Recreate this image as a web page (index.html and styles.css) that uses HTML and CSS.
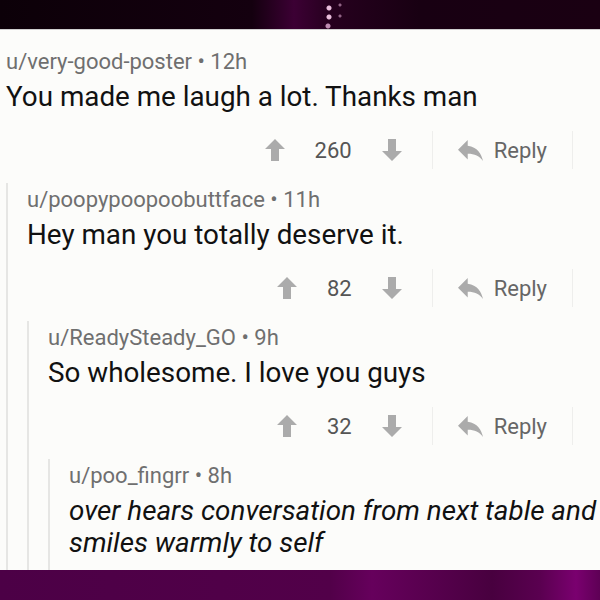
FILE: index.html
```html
<!DOCTYPE html>
<html lang="en">
<head>
    <meta charset="UTF-8">
    <meta name="viewport" content="width=device-width, initial-scale=1.0">
    <title>Comment thread</title>
    <link rel="stylesheet" href="styles.css">
</head>
<body>
    <div class="band band-top"></div>

    <main class="thread">
        <div class="comment">
            <div class="meta">u/very-good-poster &bull; 12h</div>
            <p class="text">You made me laugh a lot. Thanks man</p>
            <div class="actions">
                <svg class="vote" viewBox="0 0 20 22"><path d="M10 0L20 10H14V22H6V10H0Z"/></svg>
                <span class="count">260</span>
                <svg class="vote" viewBox="0 0 20 22"><path d="M10 22L20 12H14V0H6V12H0Z"/></svg>
                <span class="sep"></span>
                <svg class="reply-icon" viewBox="3 5 18 15"><path d="M10 9V5l-7 7 7 7v-4.1c5 0 8.5 1.6 11 5.1-1-5-4-10-11-11z"/></svg>
                <span class="reply">Reply</span>
                <span class="sep"></span>
            </div>

            <div class="comment nested">
                <div class="meta">u/poopypoopoobuttface &bull; 11h</div>
                <p class="text">Hey man you totally deserve it.</p>
                <div class="actions">
                    <svg class="vote" viewBox="0 0 20 22"><path d="M10 0L20 10H14V22H6V10H0Z"/></svg>
                    <span class="count">82</span>
                    <svg class="vote" viewBox="0 0 20 22"><path d="M10 22L20 12H14V0H6V12H0Z"/></svg>
                    <span class="sep"></span>
                    <svg class="reply-icon" viewBox="3 5 18 15"><path d="M10 9V5l-7 7 7 7v-4.1c5 0 8.5 1.6 11 5.1-1-5-4-10-11-11z"/></svg>
                    <span class="reply">Reply</span>
                    <span class="sep"></span>
                </div>

                <div class="comment nested">
                    <div class="meta">u/ReadySteady_GO &bull; 9h</div>
                    <p class="text">So wholesome. I love you guys</p>
                    <div class="actions">
                        <svg class="vote" viewBox="0 0 20 22"><path d="M10 0L20 10H14V22H6V10H0Z"/></svg>
                        <span class="count">32</span>
                        <svg class="vote" viewBox="0 0 20 22"><path d="M10 22L20 12H14V0H6V12H0Z"/></svg>
                        <span class="sep"></span>
                        <svg class="reply-icon" viewBox="3 5 18 15"><path d="M10 9V5l-7 7 7 7v-4.1c5 0 8.5 1.6 11 5.1-1-5-4-10-11-11z"/></svg>
                        <span class="reply">Reply</span>
                        <span class="sep"></span>
                    </div>

                    <div class="comment nested">
                        <div class="meta">u/poo_fingrr &bull; 8h</div>
                        <p class="text italic">over hears conversation from next table and smiles warmly to self</p>
                    </div>
                </div>
            </div>
        </div>
    </main>

    <div class="band band-bottom"></div>
</body>
</html>
```

FILE: styles.css
```css
:root {
    --meta: #6f6f6f;
    --text: #111111;
    --icon: #ababab;
    --line: #e6e6e4;
    --paper: #fcfcfa;
}

* {
    margin: 0;
    padding: 0;
    box-sizing: border-box;
}

body {
    font-family: Roboto, 'Liberation Sans', sans-serif;
    width: 600px;
    height: 600px;
    display: flex;
    flex-direction: column;
    overflow: hidden;
    background: var(--paper);
}

.band {
    height: 30px;
    flex: none;
}

.band-top {
    background:
        radial-gradient(circle at 329px 8px, rgba(255, 210, 240, 0.9) 0 2px, transparent 3px),
        radial-gradient(circle at 329px 17px, rgba(255, 210, 240, 0.9) 0 2px, transparent 3px),
        radial-gradient(circle at 328px 26px, rgba(255, 200, 240, 0.7) 0 2px, transparent 3px),
        radial-gradient(circle at 340px 5px, rgba(255, 200, 240, 0.5) 0 1px, transparent 2px),
        radial-gradient(circle at 340px 16px, rgba(255, 200, 240, 0.5) 0 1px, transparent 2px),
        linear-gradient(90deg, #0c0008 0%, #14000f 42%, #3c0034 49%, #26001e 55%, #180012 70%, #1a0012 100%);
    border-bottom: 1px solid #cfcfcf;
}

.band-bottom {
    background: linear-gradient(90deg, #4c0046 0%, #520049 55%, #66005c 62%, #48003f 82%, #5a0050 90%, #7a006f 96%, #5e0055 100%);
}

.thread {
    flex: 1;
    overflow: hidden;
    padding: 20px 0 0 6px;
}

.meta {
    font-size: 22px;
    line-height: 24px;
    color: var(--meta);
}

.text {
    font-size: 27.8px;
    line-height: 32px;
    color: var(--text);
    margin-top: 7px;
}

.italic {
    font-style: italic;
}

.actions {
    display: flex;
    align-items: center;
    justify-content: flex-end;
    height: 40px;
    margin-top: 17px;
    padding-right: 27px;
    color: #555;
}

.vote {
    width: 20px;
    height: 22px;
    fill: var(--icon);
}

.count {
    font-size: 22px;
    margin: 0 30px;
}

.sep {
    width: 1px;
    height: 38px;
    background: #eeeeec;
    margin-left: 30px;
}

.sep:last-child {
    margin-left: 25px;
}

.reply-icon {
    width: 25px;
    height: 21px;
    fill: var(--icon);
    margin-left: 25px;
}

.reply {
    font-size: 22px;
    color: #666;
    margin-left: 11px;
}

.nested {
    margin-top: 13px;
    border-left: 2px solid var(--line);
    padding: 5px 0 60px 19px;
}
```
